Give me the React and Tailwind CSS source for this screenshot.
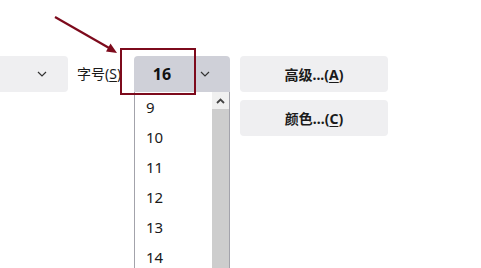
import React from "react";

const cjk = { fontFamily: '"Noto Sans", "Noto Sans CJK SC", sans-serif' };

function Chevron() {
  return (
    <svg width="10" height="6" viewBox="0 0 10 6" className="block">
      <polyline points="1,1 5,5 9,1" fill="none" stroke="#333" strokeWidth="1.2" />
    </svg>
  );
}

export default function App() {
  const items = ["9", "10", "11", "12", "13", "14"];
  return (
    <div className="relative w-[481px] h-[268px] overflow-hidden bg-white" style={cjk}>
      <div className="flex items-start pt-[56px]">
        <div className="w-[68px] h-[36px] bg-[#efeff1] rounded-r-[4px] flex items-center justify-end pr-[21px]">
          <Chevron />
        </div>
        <div className="ml-[9px] w-[50px] h-[36px] flex items-center text-[14px] text-[#1a1a1a] leading-none whitespace-nowrap">
          字号(<span className="underline underline-offset-2">S</span>)
        </div>
        <div className="ml-[7px] relative w-[96px]">
          <div className="h-[36px] bg-[#cfd0d8] rounded-t-[4px] flex items-center">
            <div className="w-[56px] text-center font-bold text-[16px] text-[#111]">16</div>
            <div className="ml-[10px]">
              <Chevron />
            </div>
          </div>
          <div className="absolute left-0 top-[36px] w-[96px] h-[200px] bg-white border-l border-r border-[#a3a3ab] flex">
            <div className="flex-1">
              {items.map((n) => (
                <div key={n} className="h-[30px] flex items-center pl-[11px] text-[15px] leading-[18px] text-[#1a1a1a]">
                  {n}
                </div>
              ))}
            </div>
            <div className="w-[17px] flex flex-col">
              <div className="h-[17px] bg-[#f0f0f0] flex items-center justify-center">
                <svg width="9" height="6" viewBox="0 0 9 6">
                  <polyline points="1,5 4.5,1.5 8,5" fill="none" stroke="#444" strokeWidth="1.8" />
                </svg>
              </div>
              <div className="flex-1 bg-[#cdcdcd]" />
            </div>
          </div>
        </div>
        <div className="ml-[10px] flex flex-col gap-[8px]">
          <div className="w-[148px] h-[36px] bg-[#efeff1] rounded-[4px] flex items-center justify-center font-bold text-[14px] text-[#1a1a1a]">
            高级...(<span className="underline underline-offset-2">A</span>)
          </div>
          <div className="w-[148px] h-[36px] bg-[#efeff1] rounded-[4px] flex items-center justify-center font-bold text-[14px] text-[#1a1a1a]">
            颜色...(<span className="underline underline-offset-2">C</span>)
          </div>
        </div>
      </div>
      <div className="absolute left-[120px] top-[48px] w-[76px] h-[47px] border-2 border-[#7d0a1c]" />
      <svg className="absolute left-0 top-0" width="481" height="268">
        <line x1="55" y1="17" x2="110" y2="48.5" stroke="#7d0a1c" strokeWidth="2.2" />
        <polygon points="117,53 106,51.5 110.5,43.5" fill="#7d0a1c" />
      </svg>
    </div>
  );
}
